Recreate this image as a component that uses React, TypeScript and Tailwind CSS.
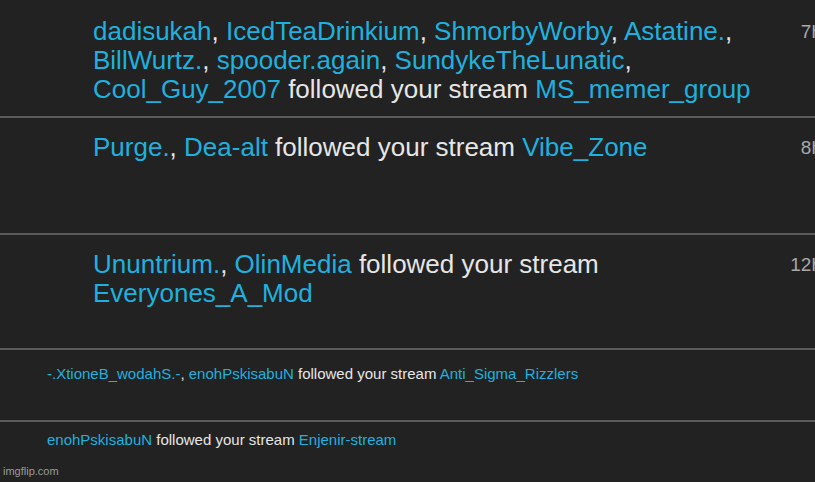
import type { ReactNode } from "react";

const Name = ({ children }: { children: ReactNode }) => (
  <span className="text-[#1eb1df]">{children}</span>
);

interface Big {
  names: string[];
  stream: string;
  time: string;
  height: string;
}

const bigRows: Big[] = [
  {
    names: ["dadisukah", "IcedTeaDrinkium", "ShmorbyWorby", "Astatine.", "BillWurtz.", "spooder.again", "SundykeTheLunatic", "Cool_Guy_2007"],
    stream: "MS_memer_group",
    time: "7h",
    height: "h-[116px] pt-[17px]",
  },
  { names: ["Purge.", "Dea-alt"], stream: "Vibe_Zone", time: "8h", height: "h-[115px] pt-[15px]" },
  { names: ["Ununtrium.", "OlinMedia"], stream: "Everyones_A_Mod", time: "12h", height: "h-[113px] pt-[15px]" },
];

const NameList = ({ names }: { names: string[] }) => (
  <>
    {names.map((n, i) => (
      <span key={n}>
        <Name>{n}</Name>
        {i < names.length - 1 ? ", " : ""}
      </span>
    ))}
  </>
);

export default function App() {
  return (
    <div
      className="w-[815px] h-[482px] overflow-hidden bg-[#222222] text-[#e6e6e6]"
      style={{ fontFamily: '"Liberation Sans", Arial, sans-serif' }}
    >
      {bigRows.map((r) => (
        <div key={r.time} className="border-b-2 border-[#5a5a5a]">
          <div className={`flex w-[822px] pl-[93px] ${r.height}`}>
            <p className="w-[690px] text-[26px] leading-[29px]">
              <NameList names={r.names} /> followed your stream <Name>{r.stream}</Name>
            </p>
            <span className="flex-1 text-right text-[19px] leading-[29px] text-[#a8a8a8]">{r.time}</span>
          </div>
        </div>
      ))}
      <div className="h-[72px] border-b-2 border-[#5a5a5a] pl-[47px] pt-[15px] text-[15px] leading-[18px]">
        <NameList names={["-.XtioneB_wodahS.-", "enohPskisabuN"]} /> followed your stream{" "}
        <Name>Anti_Sigma_Rizzlers</Name>
      </div>
      <div className="relative h-[60px] pl-[47px] pt-[9px] text-[15px] leading-[18px]">
        <Name>enohPskisabuN</Name> followed your stream <Name>Enjenir-stream</Name>
        <span className="absolute left-[3px] bottom-[2px] text-[11px] text-[#9a9a9a]">imgflip.com</span>
      </div>
    </div>
  );
}
